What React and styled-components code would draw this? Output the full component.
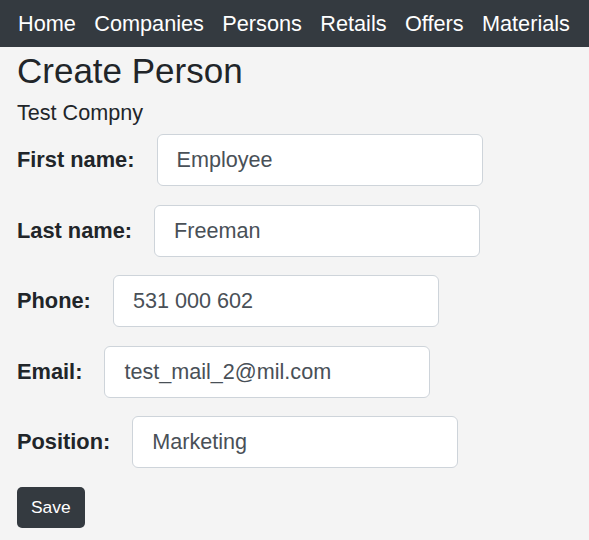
import styled, { createGlobalStyle } from "styled-components";

const GlobalStyle = createGlobalStyle`
  html, body {
    margin: 0;
    padding: 0;
    background: #f4f4f4;
    font-family: "Liberation Sans", Arial, sans-serif;
    color: #212529;
  }
`;

const links = ["Home", "Companies", "Persons", "Retails", "Offers", "Materials"];

const fields = [
  { label: "First name:", value: "Employee" },
  { label: "Last name:", value: "Freeman" },
  { label: "Phone:", value: "531 000 602" },
  { label: "Email:", value: "test_mail_2@mil.com" },
  { label: "Position:", value: "Marketing" },
];

const App = () => {
  return (
    <>
      <GlobalStyle />
      <Navbar>
        {links.map((l) => (
          <NavLink key={l} href="#">
            {l}
          </NavLink>
        ))}
      </Navbar>
      <Content>
        <Title>Create Person</Title>
        <Subtitle>Test Compny</Subtitle>
        <form onSubmit={(e) => e.preventDefault()}>
          {fields.map((f) => (
            <Row key={f.label}>
              <Label>{f.label}</Label>
              <Input defaultValue={f.value} />
            </Row>
          ))}
          <SaveButton type="submit">Save</SaveButton>
        </form>
      </Content>
    </>
  );
};

const Navbar = styled.nav`
  display: flex;
  align-items: center;
  height: 47px;
  padding: 0 9px;
  background: #343a40;
  overflow: hidden;
`;

const NavLink = styled.a`
  padding: 0 9.2px;
  font-size: 21.7px;
  color: #fff;
  text-decoration: none;
  white-space: nowrap;

  &:first-child {
    padding-left: 9px;
  }
`;

const Content = styled.main`
  padding: 0 17px;
`;

const Title = styled.h1`
  margin: 2.5px 0 0;
  font-size: 35px;
  line-height: 1.2;
  font-weight: 400;
`;

const Subtitle = styled.div`
  margin-top: 4.5px;
  font-size: 21.6px;
  line-height: 33px;
`;

const Row = styled.div`
  display: flex;
  align-items: center;
  gap: 22px;
  margin-top: 18.5px;

  &:first-child {
    margin-top: 5px;
  }
`;

const Label = styled.label`
  font-size: 21.8px;
  font-weight: 700;
  white-space: nowrap;
`;

const Input = styled.input`
  box-sizing: border-box;
  width: 326px;
  height: 52px;
  padding: 0 19px;
  font-family: inherit;
  font-size: 21.6px;
  color: #495057;
  background: #fff;
  border: 1px solid #ced4da;
  border-radius: 6px;
  outline: none;
`;

const SaveButton = styled.button`
  height: 41px;
  margin-top: 19px;
  padding: 0 14px;
  font-family: inherit;
  font-size: 17.4px;
  color: #fff;
  background: #343a40;
  border: none;
  border-radius: 5px;
  cursor: pointer;
`;

export default App;
